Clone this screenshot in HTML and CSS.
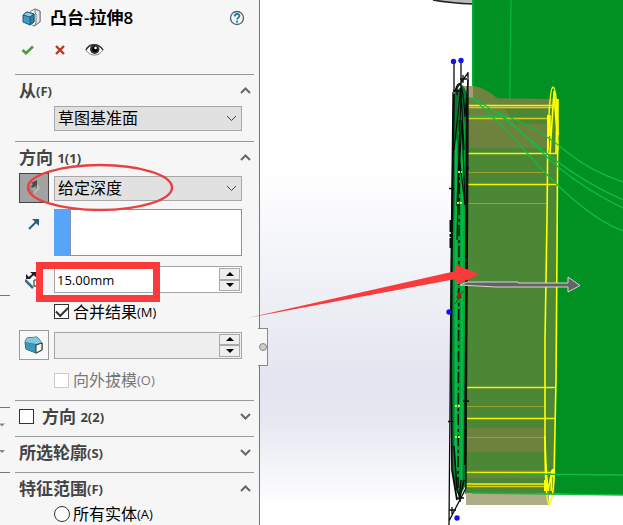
FILE: index.html
```html
<!DOCTYPE html>
<html lang="zh-CN">
<head>
<meta charset="utf-8">
<title>凸台-拉伸8</title>
<link rel="stylesheet" href="styles.css">
</head>
<body>
<div class="app">
  <aside class="panel">
    <svg class="edge-marks" viewBox="0 0 15 525" aria-hidden="true">
      <path d="M0 295.500H10M0 407.500H10M0 472.500H10" stroke="#777" fill="none"/>
      <path d="M-1 423.500h6l-3 3zM-1 450h6l-3 3z" fill="#888"/>
    </svg>
    <form class="properties">
      <header class="title-bar">
        <svg class="feature-icon" viewBox="0 0 20 20" aria-hidden="true">
          <path d="M8 3.500 13 1l5 2v11l-6 4-2-1" fill="#fff" stroke="#777"/>
          <path d="M13 1v4l1 1v9l-2 3 6-4V3z" fill="#e4e6e8" stroke="#777"/>
          <path d="M1 7l4-3 7 2v8l-4 3-7-3z" fill="#3e9cc0" stroke="#205a78"/>
          <path d="M1 7l4-3 7 2-4 3z" fill="#8fd0e6" stroke="#205a78"/>
          <path d="M8 9v8l4-3V6z" fill="#2b7ea5" stroke="#205a78"/>
        </svg>
        <h1>凸台-拉伸8</h1>
        <button type="button" class="plain help" aria-label="帮助">
          <svg viewBox="0 0 16 16" width="16" height="16"><circle cx="8" cy="8" r="6.500" fill="#f3f8fa" stroke="#50616d" stroke-width="1.300"/><path d="M5.700 6.500C5.700 3.200 10.500 3.300 10.400 6 10.300 7.800 8.100 7.600 8.100 9.600" fill="none" stroke="#257a9f" stroke-width="1.800"/><circle cx="8.100" cy="11.700" r="1.100" fill="#257a9f"/></svg>
        </button>
      </header>
      <div class="actions">
        <button type="button" class="plain" aria-label="确定"><svg viewBox="0 0 14 12" width="14" height="12"><path d="M1.500 6 5 9.300 12 2.500" fill="none" stroke="#4b9d36" stroke-width="2.600"/></svg></button>
        <button type="button" class="plain cancel" aria-label="取消"><svg viewBox="0 0 10 10" width="10" height="10"><path d="M1 1 9 9M9 1 1 9" fill="none" stroke="#c23418" stroke-width="2.400"/></svg></button>
        <button type="button" class="plain" aria-label="预览"><svg viewBox="0 0 19 14" width="19" height="14"><path d="M1 7C4 1.500 14 0 18 7 14 13.500 5 14 1 7z" fill="#fff" stroke="#888"/><path d="M1 7C4 0 14 0 18 7" fill="none" stroke="#333" stroke-width="1.500"/><circle cx="9.700" cy="6.300" r="4.700" fill="#333"/><circle cx="9.700" cy="6.300" r="2.800" fill="#000"/><circle cx="10.500" cy="5" r="1.300" fill="#fff"/></svg></button>
      </div>

      <section>
        <h2>从<small>(F)</small><svg class="chevron" viewBox="0 0 11 7"><path d="M1 6 5.500 1.500 10 6"/></svg></h2>
        <div class="row">
          <div class="select"><select aria-label="从"><option>草图基准面</option></select><svg viewBox="0 0 11 7"><path d="M1 1 5.500 5.500 10 1"/></svg></div>
        </div>
      </section>

      <section>
        <h2>方向 <small>1(1)</small><svg class="chevron" viewBox="0 0 11 7"><path d="M1 6 5.500 1.500 10 6"/></svg></h2>
        <div class="row">
          <button type="button" class="tool pressed" aria-label="反向"><svg viewBox="0 0 16 16" width="16" height="16"><path d="M1 9 5 5l2 2-2 2 3 3-2 2z" fill="#8b8b8b"/><path d="M5 3 11 0v8L9 6 7 8 5 6 7 4z" fill="#4c4c4c"/><path d="M8 13l5-5-2-3" fill="none" stroke="#c0c0c0" stroke-width="1.500"/></svg></button>
          <div class="select"><select aria-label="终止条件"><option>给定深度</option></select><svg viewBox="0 0 11 7"><path d="M1 1 5.500 5.500 10 1"/></svg></div>
        </div>
        <div class="row direction">
          <svg class="row-icon raised" viewBox="0 0 12 12"><path d="M1 11 9 3" stroke="#265f80" stroke-width="2"/><path d="M4 1h7v7z" fill="#265f80"/></svg>
          <div class="picker"><textarea aria-label="拉伸方向"></textarea></div>
        </div>
        <div class="row">
          <svg class="row-icon depth-icon" viewBox="0 0 18 18"><path d="M4 7 10 2" stroke="#222" stroke-width="2"/><path d="M1 8V3l5 5zM5 1h7v6z" fill="#222"/><path d="M0 9l8 8" stroke="#29728c" stroke-width="2.500"/><path d="M9 9h5v6H9z" fill="#fff" stroke="#222"/></svg>
          <div class="spinner"><input type="text" aria-label="深度" value="15.00mm"><span class="steps"><button type="button" aria-label="增加"><svg viewBox="0 0 8 4"><path d="M0 4 4 0 8 4z"/></svg></button><button type="button" aria-label="减少"><svg viewBox="0 0 8 4"><path d="M0 0h8L4 4z"/></svg></button></span></div>
        </div>
        <div class="row option merge"><label><input type="checkbox" checked>合并结果<small>(M)</small></label></div>
        <div class="row">
          <button type="button" class="tool" aria-label="拔模"><svg viewBox="0 0 20 18" width="20" height="18"><path d="M1 6 3 2l10-1 5 6v7l-6 3-10-4z" fill="#2c7799" stroke="#163f58"/><path d="M1 6 3 2l10-1 5 6-6 1z" fill="#82c9df"/><path d="M1 6l11 3v8L2 13z" fill="#3b9abb"/><path d="M12 9l6-2v7l-6 3z" fill="#fff" stroke="#333"/></svg></button>
          <div class="spinner off"><input type="text" aria-label="拔模角度" disabled><span class="steps"><button type="button" aria-label="增加角度"><svg viewBox="0 0 8 4"><path d="M0 4 4 0 8 4z"/></svg></button><button type="button" aria-label="减少角度"><svg viewBox="0 0 8 4"><path d="M0 0h8L4 4z"/></svg></button></span></div>
        </div>
        <div class="row option outward"><label><input type="checkbox" disabled>向外拔模<small>(O)</small></label></div>
      </section>

      <section class="closed">
        <h2><label><input type="checkbox">方向 <small>2(2)</small></label><svg class="chevron" viewBox="0 0 11 7"><path d="M1 1 5.500 5.500 10 1"/></svg></h2>
      </section>
      <section class="closed">
        <h2>所选轮廓<small>(S)</small><svg class="chevron" viewBox="0 0 11 7"><path d="M1 1 5.500 5.500 10 1"/></svg></h2>
      </section>
      <section class="scope">
        <h2>特征范围<small>(F)</small><svg class="chevron" viewBox="0 0 11 7"><path d="M1 6 5.500 1.500 10 6"/></svg></h2>
        <div class="row option"><label><input type="radio" name="scope">所有实体<small>(A)</small></label></div>
      </section>
    </form>
    <button type="button" class="splitter" aria-label="折叠面板"></button>
  </aside>

  <main class="viewport">
    <svg viewBox="260 0 363 525" preserveAspectRatio="xMinYMin slice" role="img" aria-label="拉伸预览">
      <path d="M433 0Q450 3 473 4V0z" fill="#bbb"/><path d="M433 0Q450 3 473 4" fill="none" stroke="#222" stroke-width="1.500"/>
      <path d="M472 0H623V495L472 492z" fill="#009122"/>
      <path d="M473 0V98M511 0 509.500 117" stroke="#00b336" stroke-width="1.500" fill="none"/>
      <path d="M465 86H474Q485 88 497 98L558 99 555 494H465z" fill="#4c8736"/>
      <path d="M465 86H474Q485 88 497 98L509 115 515 124H465z" fill="#6c8440"/>
      <path d="M464 86H473V98H464z" fill="#a59f79"/>
      <path d="M497 99H557V109H497zM467 124H549V148H467zM466 428H545V452H466zM466 470H548V478H466z" fill="#6c823d"/>
      <path d="M466 493H549V505H466z" fill="#afad86"/>
      <path d="M468 105.500H557M468 153.500H557M467 184.500H557M466 387.500H556M466 418.500H556M466 472.500H555M461 484H548" stroke="#f5f500" stroke-width="1.500"/>
      <path d="M468 107.500H555M465 118.500H549M466 486.500H548" stroke="#d5ca20" stroke-width="1.300"/>
      <path d="M466 172.500H548M466 203.500H547M466 406.500H546M466 437.500H546" stroke="#98a22b"/>
      <g fill="none" stroke="#ff0" stroke-width="1.600">
        <path d="M548 116 547 220 545 340 545 440 547 491M558 99 557 250 556 380 554 477"/>
        <path d="M548 150Q549 88 553 87 557 88 558 135M550 153 554 91 558 150M557 102 556 154M545 436Q545 501 549 504 553 500 554 477M545 460 548 491 552 470 551 491M547 116h3v20"/>
      </g>
      <path d="M556 99h2v11h-2zM547 115h2v9h-2zM544 480h4v11h-4zM552 469h3v8h-3z" fill="#ff0"/>
      <g fill="none" stroke="#10bd40" stroke-width="1.300">
        <path d="M460 98H473Q499 113 530 139 570 176 623 200M473 98Q494 118 520 145 580 215 623 231M497 111Q522 132 550 160 580 187 623 208M509 117Q544 132 567 152 590 171 623 182M459 116H508M460 473.500 623 475M472 493 623 495"/>
      </g>
      <path d="M454 93 463 85 468 95 466 485 459 497 453 480 451 410 452 230z" fill="#07782f"/>
      <path d="M460 99 465 125 465 350 463 465 458 491 454 450 453 240z" fill="#00a437"/>
      <path d="M456 140V470M462.500 120 461.500 480" stroke="#00bd43" stroke-width="2"/>
      <g stroke="#080f0a" fill="none">
        <path d="M454 62V92M461 61V86M454 92 468 73M468 72V151M453 92 452 180 451 275 450 405 449 525M468 140 466 470V488L449 521" stroke-width="1.300"/>
        <path d="M454 94 452 230 451 370 452 470 457 500M467 98 466 300 465 465" stroke-width="1.800"/>
        <path d="M455 91Q462 68 465 117L468 80M461 96 457 206 462 120 465 205 459 155 457 240M461 86 454 150M461 90 464 150M461 480 459 500" stroke-width="1.200"/>
        <path d="M459.500 120 458 490" stroke-width="1.500" stroke-dasharray="11 4 3 3"/>
        <path d="M453 91h8M457 87v8M460 79h7M463 75v8M449 188.500h5M448 421.500h5M466 168h3M463 401h6M449 510h7M452 507v7M456 498h8M460 494v8" stroke-width="1.300"/>
        <path d="M451 220V248" stroke-width="3" stroke-dasharray="12 2 3 1"/>
        <path d="M454 446 457 490 460 497 464 480" stroke-width="1.500"/>
      </g>
      <path d="M458 172h4M457 203h6M455 406h6M455 437h6" stroke="#d6e633" stroke-width="2" stroke-dasharray="2 1"/>
      <path d="M467 282H518V283H568V277L580 285.500 568 292V287H496L460 285z" fill="#626362" stroke="#d6d6d1"/>
      <path d="M459 263l4 8-5 3zM456 298l3-7 3 7z" fill="#c91515"/><path d="M455 304 463 291M457 291l4 7" stroke="#911d0d"/>
      <g fill="#1414f0"><circle cx="453.500" cy="61.500" r="2.700"/><circle cx="461" cy="60.500" r="2.700"/><circle cx="449" cy="312" r="2.700"/><circle cx="457" cy="518" r="2.700"/></g>
    </svg>
  </main>

  <svg class="markup" viewBox="0 0 623 525" aria-hidden="true">
    <ellipse cx="100" cy="187.500" rx="72" ry="22.500" fill="none" stroke="#e84142" stroke-width="2.400"/>
    <rect x="39.500" y="265.500" width="117" height="33" fill="none" stroke="#fb3a3b" stroke-width="7"/>
    <path d="M247 318 456 271 456 265 479 274 457 285 456 279z" fill="#fb3a3b"/>
  </svg>
</div>
</body>
</html>
```
FILE: styles.css
```css
* { box-sizing: border-box; }

body {
  margin: 0;
  overflow: hidden;
  background: #fff;
  color: #000;
  font-family: "Open Sans", "Noto Sans CJK SC", sans-serif;
  font-size: 16px;
}

button, input, select, textarea { font: inherit; color: inherit; margin: 0; }

.app {
  position: relative;
  display: grid;
  grid-template-columns: 260px 1fr;
  height: 100vh;
}

.panel {
  position: relative;
  display: flex;
  min-height: 0;
  background: #f6f6f6;
  border-right: 1px solid #777;
}

.edge-marks { width: 15px; height: 525px; flex: none; }
.properties { flex: 1; min-width: 0; margin-right: 5px; }

.title-bar {
  display: flex;
  align-items: center;
  height: 35px;
  padding: 0 9px 0 7px;
}
.feature-icon { width: 20px; height: 20px; margin-right: 8px; }
h1 { flex: 1; margin: 0; font-size: 17px; line-height: 24px; }
h1, h2 { font-weight: 600; }

.plain { display: flex; padding: 0; border: 0; background: none; }
.actions { display: flex; align-items: center; height: 30px; margin-bottom: 9px; padding-left: 6px; gap: 20px; }

section { border-top: 1px solid #999; padding-bottom: 10px; }
section.closed { padding-bottom: 4px; }

h2 {
  display: flex;
  align-items: center;
  height: 31px;
  margin: 0;
  padding: 0 3px 0 4px;
  color: #444;
  font-size: 17px;
  line-height: 24px;
  white-space: pre;
}
h2 small { font-size: 13px; font-weight: 700; }
h2 label { display: flex; align-items: center; }
h2 input { margin-right: 8px; }
.chevron { width: 11px; height: 7px; margin-left: auto; fill: none; stroke: #666; stroke-width: 2; }

.row {
  display: grid;
  grid-template-columns: 30px minmax(0, 1fr);
  column-gap: 5px;
  align-items: center;
  padding: 0 12px 0 4px;
}
.row > :only-child { grid-column: 2; }

.select { position: relative; }
.select select {
  display: block;
  width: 100%;
  height: 25px;
  padding: 0 3px;
  appearance: none;
  border: 1px solid #a8a8a8;
  border-radius: 0;
  background: #e1e1e1;
  line-height: 23px;
}
.select svg {
  position: absolute;
  right: 5px;
  top: 9px;
  width: 11px;
  height: 7px;
  fill: none;
  stroke: #444;
  pointer-events: none;
}

.tool {
  display: grid;
  place-items: center;
  width: 30px;
  height: 30px;
  padding: 0;
  border: 1px solid #999;
  background: #f8f8f8;
}
.pressed { border-color: #444; background: #a3a3a3; }

.row-icon { width: 12px; height: 12px; justify-self: center; }
.raised { align-self: start; margin-top: 9px; }
.depth-icon { width: 18px; height: 18px; }
.direction { padding-top: 6px; padding-bottom: 10px; }
.picker { padding-left: 16px; background: #56a5fb; }
textarea {
  display: block;
  width: 100%;
  height: 47px;
  resize: none;
  border: 1px solid #8593b0;
  border-radius: 0;
  background: #fff;
}

.spinner {
  display: flex;
  height: 27px;
  padding: 1px;
  border: 1px solid #a5a5a5;
  background: #fff;
}
.spinner input { flex: 1; min-width: 0; padding: 0 1px; border: 0; background: none; font-size: 13px; }
.steps { display: grid; width: 21px; }
.steps button { display: grid; place-items: center; padding: 0; border: 1px solid #aaa; background: #eee; }
.steps svg { width: 8px; height: 4px; }
.off { background: #eee; }

.option label { display: flex; align-items: center; line-height: 20px; }
.option small { font-size: 13px; }
.merge { height: 37px; }
.outward { height: 30px; padding-top: 10px; color: #777; }

input[type="checkbox"], input[type="radio"] {
  display: grid;
  place-items: center;
  width: 15px;
  height: 15px;
  appearance: none;
  border: 1px solid #333;
  background: #fff;
}
.option input { margin-right: 4px; }
.option input[type="radio"] { width: 16px; height: 16px; margin-right: 3px; border-radius: 50%; }
input[type="checkbox"]:disabled { border-color: #ccc; }
input[type="checkbox"]:checked::before {
  content: "";
  width: 10px;
  height: 5px;
  margin-bottom: 3px;
  border: solid #333;
  border-width: 0 0 2px 2px;
  transform: rotate(-45deg);
}

.splitter {
  position: absolute;
  left: 258px;
  top: 328px;
  z-index: 1;
  display: grid;
  place-items: center;
  width: 10px;
  height: 38px;
  padding: 0;
  border: 1px solid #888;
  border-left: 0;
  background: #f6f6f6;
}
.splitter::before {
  content: "";
  width: 6px;
  height: 6px;
  border: 1px solid #888;
  border-radius: 50%;
  background: #ccc;
}

.viewport {
  min-width: 0;
  min-height: 0;
  background: linear-gradient(#fff 32%, #e2e5ef 73%, #e6e8f1 80%, #fff 97%);
}
.viewport svg { display: block; width: 100%; height: 100%; }

.markup {
  position: absolute;
  left: 0;
  top: 0;
  width: 623px;
  height: 525px;
  pointer-events: none;
  z-index: 2;
}
```
